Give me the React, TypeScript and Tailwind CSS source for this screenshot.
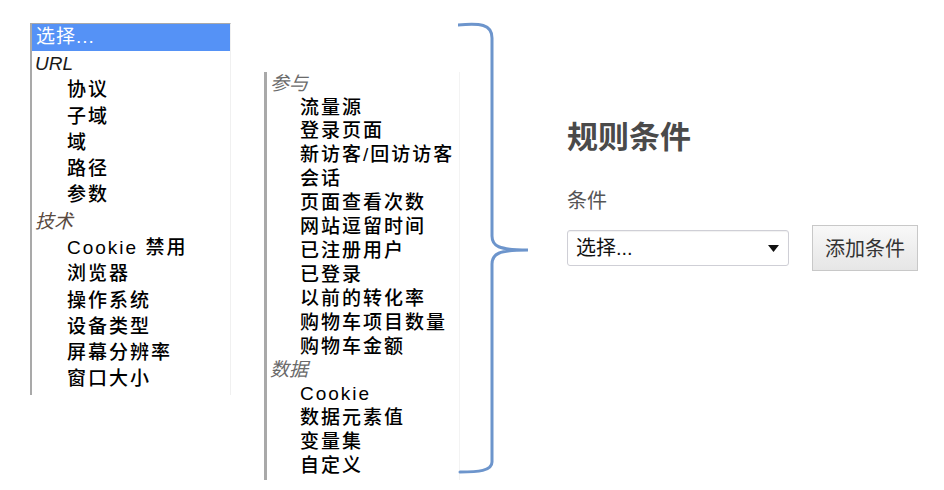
import React from "react";

type Row = { label: string; group?: boolean; tone?: string };

const LEFT: Row[] = [
  { label: "URL", group: true, tone: "text-[#1a1a1a]" },
  { label: "协议" },
  { label: "子域" },
  { label: "域" },
  { label: "路径" },
  { label: "参数" },
  { label: "技术", group: true, tone: "text-[#5a4a40]" },
  { label: "Cookie 禁用" },
  { label: "浏览器" },
  { label: "操作系统" },
  { label: "设备类型" },
  { label: "屏幕分辨率" },
  { label: "窗口大小" },
];

const RIGHT: Row[] = [
  { label: "参与", group: true, tone: "text-[#6a6a6a]" },
  { label: "流量源" },
  { label: "登录页面" },
  { label: "新访客/回访访客" },
  { label: "会话" },
  { label: "页面查看次数" },
  { label: "网站逗留时间" },
  { label: "已注册用户" },
  { label: "已登录" },
  { label: "以前的转化率" },
  { label: "购物车项目数量" },
  { label: "购物车金额" },
  { label: "数据", group: true, tone: "text-[#6a6a6a]" },
  { label: "Cookie" },
  { label: "数据元素值" },
  { label: "变量集" },
  { label: "自定义" },
];

const font = "font-['Liberation_Sans','Noto_Sans_CJK_SC',sans-serif]";

function ListRow({ row, h, indent }: { row: Row; h: string; indent: string }) {
  if (row.group) {
    return (
      <div className={`${h} flex items-center pl-[3px] italic text-[19px] ${row.tone}`}>
        {row.label}
      </div>
    );
  }
  return (
    <div className={`${h} ${indent} flex items-center text-[19px] tracking-[2px] font-medium text-black whitespace-nowrap overflow-hidden`}>
      {row.label}
    </div>
  );
}

function Bracket() {
  return (
    <svg width="80" height="460" viewBox="0 0 80 460" className="shrink-0">
      <path
        d="M0 11 C 22 9, 34 10, 34 24 L 34 222 C 34 232, 40 236, 70 236 C 40 236, 34 240, 34 250 L 34 448 C 34 457, 20 458, 2 458"
        fill="none"
        stroke="#6d95cc"
        strokeWidth="3"
        strokeLinecap="round"
      />
    </svg>
  );
}

export default function App() {
  return (
    <div className={`w-[944px] h-[490px] bg-white flex items-start overflow-hidden ${font}`}>
      {/* first dropdown */}
      <div className="ml-[30px] mt-[23px] w-[201px] border-l-2 border-t border-[#a9a9a9] border-r border-r-[#f0f0f0] pb-[2px]">
        <div className="h-[27px] flex items-center pl-[4px] bg-[#5592f6] text-white text-[19px] tracking-[1px]">
          选择...
        </div>
        {LEFT.map((r) => (
          <ListRow key={r.label} row={r} h="h-[26.3px]" indent="pl-[35px]" />
        ))}
      </div>

      {/* second dropdown */}
      <div className="ml-[33px] mt-[72px] w-[196px] border-l-[3px] border-[#a9a9a9] border-r border-r-[#f3f3f3] pb-[2px]">
        {RIGHT.map((r) => (
          <ListRow key={r.label} row={r} h="h-[23.9px]" indent="pl-[33px]" />
        ))}
      </div>

      <div className="mt-[14px] -ml-[2px]">
        <Bracket />
      </div>

      {/* rule condition form */}
      <div className="ml-[29px] mt-[116px] flex flex-col">
        <h2 className="text-[31px] font-bold text-[#4a4a4a] leading-[38px] font-['Noto_Sans_CJK_SC',sans-serif]">
          规则条件
        </h2>
        <div className="mt-[33px] text-[20px] text-[#555] leading-[26px] font-['Noto_Sans_CJK_SC',sans-serif]">
          条件
        </div>
        <div className="mt-[12px] flex items-center gap-[23px]">
          <div className="w-[222px] h-[36px] border border-[#cfcfd6] rounded-[3px] bg-white flex items-center justify-between pl-[8px] pr-[9px] shadow-[inset_0_1px_1px_rgba(0,0,0,0.06)]">
            <span className="text-[20px] text-[#111]">选择...</span>
            <svg width="11" height="7" viewBox="0 0 11 7">
              <path d="M0 0 L11 0 L5.5 7 Z" fill="#111" />
            </svg>
          </div>
          <button className="w-[106px] h-[46px] border border-[#c8c8c8] bg-gradient-to-b from-[#f8f8f8] to-[#e6e6e6] text-[20px] text-[#333] font-['Noto_Sans_CJK_SC',sans-serif]">
            添加条件
          </button>
        </div>
      </div>
    </div>
  );
}
